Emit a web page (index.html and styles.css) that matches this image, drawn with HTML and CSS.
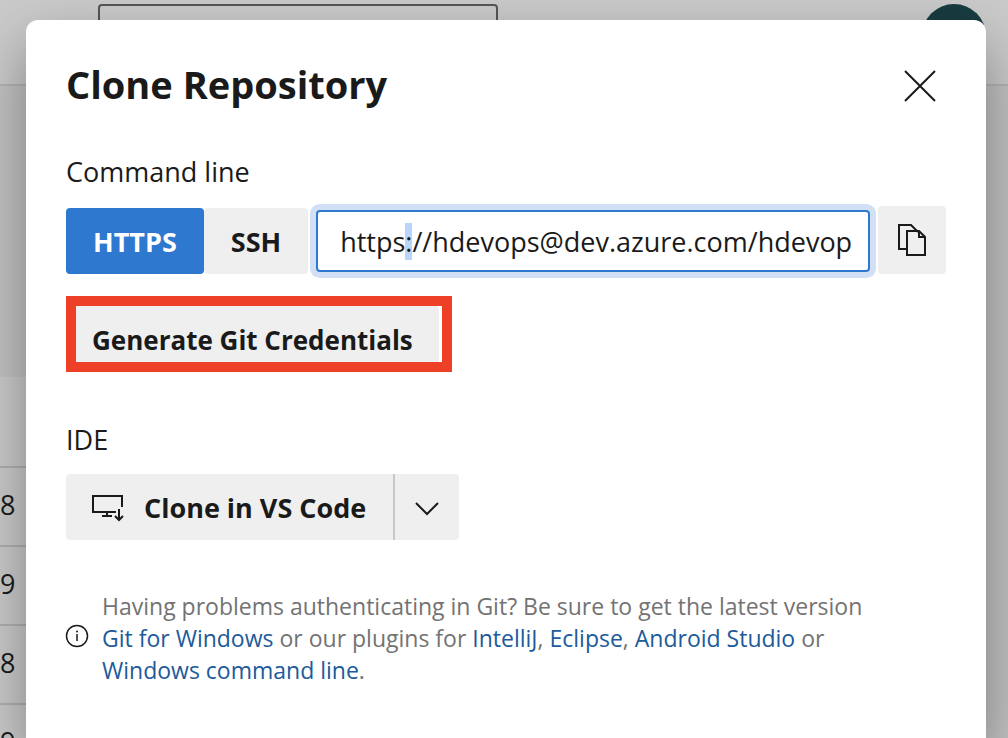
FILE: index.html
```html
<!DOCTYPE html>
<html lang="en">
<head>
<meta charset="utf-8">
<meta name="viewport" content="width=device-width, initial-scale=1">
<title>Clone Repository</title>
<link rel="stylesheet" href="styles.css">
</head>
<body>
<div class="backdrop" aria-hidden="true">
  <div class="topbar">
    <div class="search"></div>
    <div class="avatar"></div>
  </div>
  <div class="toolbar"></div>
  <div class="rows">
    <div class="row row-head"></div>
    <div class="row">8</div>
    <div class="row">9</div>
    <div class="row">8</div>
    <div class="row">9</div>
  </div>
</div>
<main class="dialog" role="dialog" aria-labelledby="title">
  <header class="dialog-header">
    <h1 class="title" id="title">Clone Repository</h1>
    <button class="close" type="button" aria-label="Close">
      <svg width="32" height="32" viewBox="0 0 32 32" fill="none" stroke="currentColor" stroke-width="2"><path d="M1 1L31 31M31 1L1 31"/></svg>
    </button>
  </header>
  <section class="section">
    <label class="label" for="url">Command line</label>
    <div class="clone-row">
      <div class="toggle">
        <button class="btn btn-primary" type="button">HTTPS</button>
        <button class="btn" type="button">SSH</button>
      </div>
      <input class="url" id="url" type="text" value="https://hdevops@dev.azure.com/hdevop" spellcheck="false">
      <button class="btn copy" type="button" aria-label="Copy clone URL">
        <svg width="28" height="32" viewBox="0 0 28 32" fill="none" stroke="currentColor" stroke-width="2"><path d="M8 25H1V1H13L20 8M9 7H21L27 13V31H9ZM21 7V13H27"/></svg>
      </button>
    </div>
    <div class="highlight">
      <button class="btn generate" type="button">Generate Git Credentials</button>
    </div>
  </section>
  <section class="section ide">
    <h2 class="label">IDE</h2>
    <div class="split">
      <button class="btn vscode" type="button">
        <svg width="34" height="28" viewBox="0 0 34 28" fill="none" stroke="currentColor" stroke-width="2"><path d="M30 14V3H1V19H24M15 19V23M10 23H20M27 16V27M23 23L27 27L31 23"/></svg>
        Clone in VS Code
      </button>
      <button class="btn more" type="button" aria-label="More IDE options">
        <svg width="24" height="16" viewBox="0 0 24 16" fill="none" stroke="currentColor" stroke-width="2"><path d="M1 4L12 15L23 4"/></svg>
      </button>
    </div>
  </section>
  <div class="note">
    <svg class="info" width="24" height="24" viewBox="0 0 24 24" fill="none" stroke="currentColor"><circle cx="11" cy="10" r="10.5" stroke-width="1.5"/><path d="M11 8V15" stroke-width="1.5"/><circle cx="11" cy="5.5" r="1" fill="currentColor" stroke="none"/></svg>
    <p class="note-text">Having problems authenticating in Git? Be sure to get the latest version <a href="#">Git for Windows</a> or our plugins for <a href="#">IntelliJ</a>, <a href="#">Eclipse</a>, <a href="#">Android Studio</a> or <a href="#">Windows command line</a>.</p>
  </div>
</main>
<script src="script.js"></script>
</body>
</html>
```
FILE: styles.css
```css
* { box-sizing: border-box; }
body {
  margin: 0;
  min-height: 100vh;
  display: flex;
  padding: 20px 22px 0 26px;
  background: #c2c2c2;
  color: #1a1a1a;
  font-family: "Open Sans", "Noto Sans", sans-serif;
  font-size: 27px;
  overflow: hidden;
}
button, input { font: inherit; color: inherit; }
svg { display: block; flex: none; overflow: visible; }

.backdrop {
  position: absolute;
  inset: 0;
  overflow: hidden;
  display: flex;
  flex-direction: column;
}
.topbar {
  flex: none;
  height: 86px;
  padding: 4px 22px 0 98px;
  display: flex;
  justify-content: space-between;
  background: #cacaca;
  border-bottom: 2px solid #b4b4b4;
}
.search {
  width: 400px;
  height: 64px;
  border: 2px solid #555;
  border-radius: 4px;
}
.avatar {
  width: 64px;
  height: 64px;
  border-radius: 50%;
  background: #183c40;
}
.toolbar { flex: none; height: 291px; }
.rows { width: 50%; background: #cacaca; }
.row {
  height: 79px;
  line-height: 74px;
  border-bottom: 2px solid #b0b0b0;
}
.row-head { height: 91px; }

.dialog {
  position: relative;
  flex: 1;
  min-width: 0;
  padding: 32px 40px 40px;
  background: #fff;
  border-radius: 12px 12px 0 0;
  box-shadow: 0 24px 56px rgba(0, 0, 0, 0.36);
}
.dialog-header {
  display: flex;
  justify-content: space-between;
  align-items: flex-end;
  margin-bottom: 36px;
}
.title {
  margin: 0;
  font-size: 38px;
  line-height: 64px;
  font-weight: 700;
}
.close {
  padding: 0 10px 14px;
  border: 0;
  background: none;
}
.label {
  display: block;
  margin: 0;
  font-size: 27px;
  font-weight: 400;
  line-height: 40px;
}
.clone-row {
  display: flex;
  align-items: flex-end;
  gap: 8px;
  margin-top: 14px;
}
.toggle { display: flex; }
.toggle .btn { padding: 0 27px; }
.btn {
  height: 66px;
  padding: 0 27px 0 26px;
  border: 0;
  border-radius: 4px;
  background: #efefef;
  font-weight: 700;
  white-space: nowrap;
}
.toggle .btn-primary { background: #2f78d0; color: #fff; }
.url {
  flex: 1;
  min-width: 0;
  height: 62px;
  margin: 0 0 2px;
  padding: 0 8px 0 22px;
  border: 2px solid #2f78d0;
  border-radius: 4px;
  outline: 0;
  box-shadow: 0 0 0 6px #d2e0f6;
}
.url::selection { background: #b8d6fb; color: inherit; }
.copy {
  width: 68px;
  height: 68px;
  padding: 0 20px;
}
.highlight {
  width: fit-content;
  margin-top: 22px;
  padding-right: 3px;
  border: 10px solid #ee4026;
}
.generate {
  display: block;
  height: 56px;
  padding: 12px 26px 0 16px;
  font-size: 26px;
  line-height: 40px;
  border-radius: 0 4px 0 0;
}
.ide { margin-top: 48px; }
.split {
  display: flex;
  width: fit-content;
  margin-top: 14px;
}
.vscode {
  display: flex;
  align-items: center;
  gap: 18px;
  border-radius: 4px 0 0 4px;
}
.more {
  width: 66px;
  padding: 0 20px;
  border-left: 2px solid #c8c8c8;
  border-radius: 0 4px 4px 0;
}
.note {
  display: flex;
  align-items: center;
  gap: 12px;
  max-width: 820px;
  margin-top: 50px;
}
.note-text {
  margin: 0;
  color: #737373;
  font-size: 23px;
  line-height: 32px;
}
.note-text a { color: #205a9b; text-decoration: none; }
```
FILE: script.js
```js
// Focus the clone URL with the scheme separator selected.
const url = document.getElementById("url");
url.focus();
url.setSelectionRange(5, 6);
```
